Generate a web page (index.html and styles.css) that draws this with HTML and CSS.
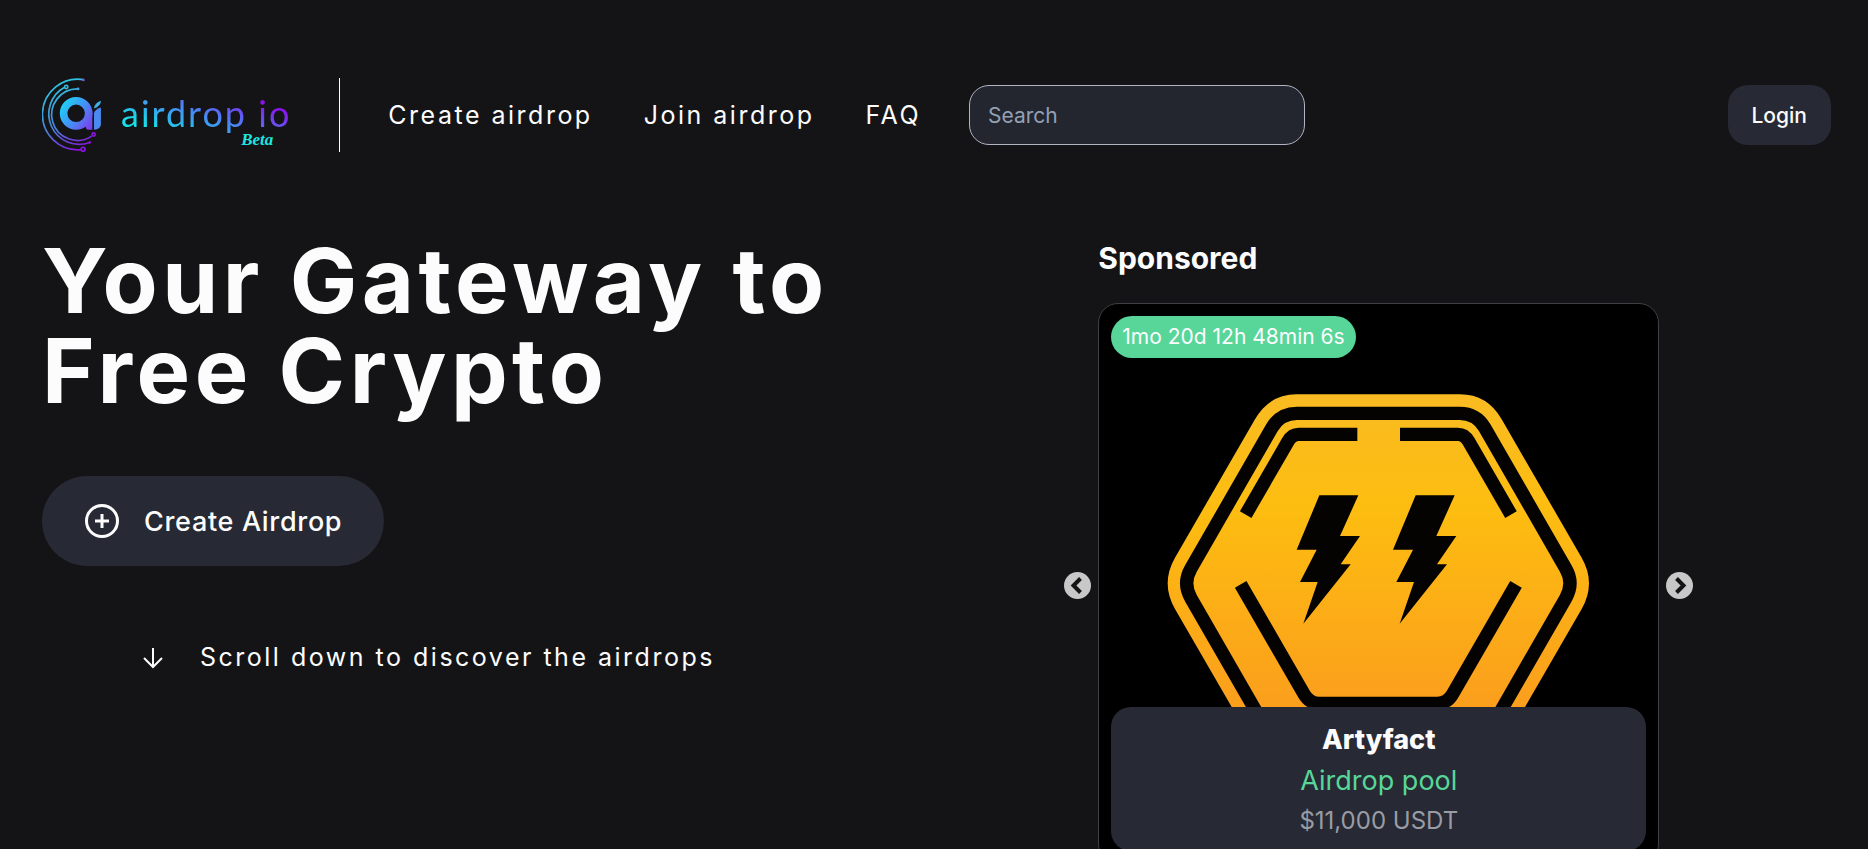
FILE: index.html
```html
<!DOCTYPE html>
<html lang="en">

<head>
    <meta charset="utf-8">
    <meta name="viewport" content="width=device-width, initial-scale=1">
    <title>airdrop io</title>
    <link rel="stylesheet" href="styles.css">
</head>

<body>
    <header class="header">
        <a class="logo" href="#">
            <svg class="logo-mark" viewBox="36 38 184 224" aria-hidden="true">
                <defs>
                    <linearGradient id="arcs" gradientUnits="userSpaceOnUse" x1="70" y1="60" x2="150" y2="255">
                        <stop offset="0" stop-color="#2fc4e0"/>
                        <stop offset="0.6" stop-color="#4a7fd8"/>
                        <stop offset="1" stop-color="#8a12dc"/>
                    </linearGradient>
                    <linearGradient id="letters" gradientUnits="userSpaceOnUse" x1="95" y1="120" x2="195" y2="195">
                        <stop offset="0" stop-color="#1fd0f5"/>
                        <stop offset="0.5" stop-color="#4a86f5"/>
                        <stop offset="1" stop-color="#8a2be8"/>
                    </linearGradient>
                </defs>
                <g fill="none" stroke="url(#arcs)" stroke-width="5">
                    <path d="M162 43A107 107 0 1 0 154 255"/>
                    <path d="M104 66A92 92 0 0 0 180 233"/>
                    <path d="M145 71A78 78 0 1 0 186 214"/>
                    <circle cx="109" cy="65" r="5"/>
                    <circle cx="192" cy="209" r="5" stroke="#8a12dc"/>
                    <circle cx="160" cy="254" r="6" stroke="#8a12dc"/>
                </g>
                <circle cx="161" cy="44" r="4" fill="#7a5ad8"/>
                <circle cx="145" cy="71" r="4" fill="#4a9fe0"/>
                <circle cx="180" cy="233" r="4" fill="#8a12dc"/>
                <circle cx="139" cy="145" r="38" fill="none" stroke="url(#letters)" stroke-width="23"/>
                <path d="M168 138L188 138V195H178Q168 195 168 184Z" fill="url(#letters)"/>
                <path d="M193 145Q195 133 214 127V178Q214 192 193 195Z" fill="#4a8af0"/>
                <path d="M193 130Q195 113 214 107Q214 124 193 130Z" fill="#3fb0e8"/>
            </svg>
            <span class="logo-name">airdrop io</span>
            <span class="logo-beta">Beta</span>
        </a>
        <nav class="nav">
            <a href="#">Create airdrop</a>
            <a href="#">Join airdrop</a>
            <a href="#">FAQ</a>
        </nav>
        <input class="search" type="search" placeholder="Search" aria-label="Search">
        <button class="login" type="button">Login</button>
    </header>

    <main class="main">
        <section class="hero">
            <h1>Your Gateway to<br>Free Crypto</h1>
            <button class="create" type="button">
                <svg viewBox="0 0 36 36" width="36" height="36" aria-hidden="true">
                    <circle cx="18" cy="18" r="15.5"/>
                    <path d="M18 11V25M11 18H25"/>
                </svg>
                Create Airdrop
            </button>
            <p class="scroll">
                <svg viewBox="0 0 24 24" width="24" height="24" aria-hidden="true">
                    <path d="M12 3V22M3 13L12 22L21 13"/>
                </svg>
                Scroll down to discover the airdrops
            </p>
        </section>

        <section class="sponsored">
            <h2>Sponsored</h2>
            <div class="carousel">
                <button class="arrow" type="button" aria-label="Previous">
                    <svg viewBox="0 0 27 27" aria-hidden="true">
                        <circle cx="13.5" cy="13.5" r="13.5"/>
                        <path d="M16.5 6.5L9.5 13.5L16.5 20.5"/>
                    </svg>
                </button>
                <article class="card">
                    <!-- hexagon artwork -->
                    <svg class="card-art" viewBox="-153 -201 1677 1677" aria-hidden="true">
                        <defs>
                            <linearGradient id="gold" gradientUnits="userSpaceOnUse" x1="0" y1="70" x2="0" y2="1204">
                                <stop offset="0" stop-color="#f9bb22"/>
                                <stop offset="0.3" stop-color="#fdbd10"/>
                                <stop offset="0.8" stop-color="#fba01c"/>
                                <stop offset="1" stop-color="#f8901c"/>
                            </linearGradient>
                        </defs>
                        <path fill="url(#gold)" d="M440 70H930Q1012 70 1055 145L1295 560Q1339 637 1295 714L1055 1129Q1012 1204 930 1204H440Q358 1204 315 1129L75 714Q31 637 75 560L315 145Q358 70 440 70Z"/>
                        <g fill="none" stroke="#050202" stroke-width="40">
                            <path d="M441 127H929Q979 127 1004 170L1247 592Q1273 637 1247 682L1004 1104Q979 1147 929 1147H441Q391 1147 366 1104L123 682Q97 637 123 592L366 170Q391 127 441 127Z"/>
                            <path d="M622 190H446Q426 190 414 211L287 431"/>
                            <path d="M750 190H924Q944 190 956 211L1083 431"/>
                            <path d="M272 640L462 969Q478 997 508 997H862Q892 997 908 969L1098 640"/>
                        </g>
                        <g fill="#050202">
                            <path d="M508 373H625L570 495H630L572 580H602L460 758L503 633H450L500 536H440Z"/>
                            <path d="M797 373H914L859 495H919L861 580H891L749 758L792 633H739L789 536H729Z"/>
                        </g>
                    </svg>
                    <span class="timer">1mo 20d 12h 48min 6s</span>
                    <div class="info">
                        <h3>Artyfact</h3>
                        <p class="pool">Airdrop pool</p>
                        <p class="amount">$11,000 USDT</p>
                    </div>
                </article>
                <button class="arrow" type="button" aria-label="Next">
                    <svg viewBox="0 0 27 27" aria-hidden="true">
                        <circle cx="13.5" cy="13.5" r="13.5"/>
                        <path d="M10.5 6.5L17.5 13.5L10.5 20.5"/>
                    </svg>
                </button>
            </div>
        </section>
    </main>
</body>

</html>
```

FILE: styles.css
```css
* {
    box-sizing: border-box;
}

html {
    scrollbar-width: none;
}

body {
    margin: 0;
    padding: 78px 37px 0 42px;
    background-color: #141416;
    color: #fcfcfd;
    font-family: Inter, "Liberation Sans", sans-serif;
}

h1, h2, h3, p {
    margin: 0;
}

button {
    border: 0;
    color: #fcfcfd;
    font-family: inherit;
    font-weight: 500;
    cursor: pointer;
}

/* header */
.header {
    display: flex;
    align-items: center;
}

.logo {
    position: relative;
    display: flex;
    align-items: center;
    gap: 18px;
    height: 74px;
    padding-right: 48px;
    border-right: 1px solid #fcfcfd;
    text-decoration: none;
}

.logo-mark {
    width: 61px;
    height: 74px;
}

.logo-name {
    padding-bottom: 4px;
    font-family: Lato, sans-serif;
    font-size: 36px;
    font-weight: 400;
    line-height: 44px;
    letter-spacing: 2px;
    background: linear-gradient(20deg, #16e0e8 20%, #4a86f5 50%, #8a12ec 80%);
    background-clip: text;
    -webkit-background-clip: text;
    color: transparent;
}

.logo-beta {
    position: absolute;
    right: 66px;
    bottom: 2px;
    color: #1fe6e0;
    font-family: "Liberation Serif", cursive;
    font-size: 17px;
    font-style: italic;
    font-weight: 700;
    line-height: 20px;
}

.nav {
    display: flex;
    gap: 51px;
    margin: 0 48px;
}

.nav a {
    color: #fcfcfd;
    font-size: 25px;
    letter-spacing: 0.1em;
    text-decoration: none;
    white-space: nowrap;
}

.search {
    width: 336px;
    height: 60px;
    padding: 0 18px;
    border: 1px solid #b1b5c3;
    border-radius: 20px;
    background-color: #23262f;
    color: #fcfcfd;
    font-family: inherit;
    font-size: 21px;
}

.search::placeholder {
    color: #94a0b4;
}

.login {
    height: 60px;
    margin-left: auto;
    padding: 0 24px;
    border-radius: 20px;
    background-color: #272a34;
    font-size: 21px;
}

/* content */
.main {
    display: grid;
    grid-template-columns: 4fr 3fr;
    padding-top: 84px;
}

h1 {
    font-size: 90px;
    font-weight: 700;
    line-height: 90px;
    letter-spacing: 0.05em;
}

.create {
    display: flex;
    align-items: center;
    gap: 24px;
    height: 90px;
    margin-top: 60px;
    padding: 0 42px;
    border-radius: 45px;
    background-color: #272a34;
    font-size: 27px;
    letter-spacing: 0.025em;
}

.create svg, .scroll svg {
    fill: none;
    stroke: #fcfcfd;
    stroke-width: 3;
}

.scroll {
    display: flex;
    align-items: center;
    gap: 35px;
    margin-top: 75px;
    padding-left: 99px;
    font-size: 25px;
    line-height: 32px;
    letter-spacing: 0.1em;
}

.scroll svg {
    stroke-width: 2;
}

.sponsored h2 {
    padding: 4px 0 27px 34px;
    font-size: 30px;
    line-height: 36px;
}

.carousel {
    display: flex;
    align-items: center;
    gap: 7px;
}

.arrow {
    flex: none;
    width: 27px;
    height: 27px;
    margin-top: 4px;
    padding: 0;
    background: none;
}

.arrow svg {
    display: block;
    fill: #c8c8c8;
}

.arrow path {
    fill: none;
    stroke: #141416;
    stroke-width: 4;
}

.card {
    position: relative;
    display: flex;
    flex-direction: column;
    justify-content: space-between;
    align-items: flex-start;
    width: 100%;
    max-width: 561px;
    aspect-ratio: 1;
    padding: 12px;
    border: 1px solid #404044;
    border-radius: 20px;
    background-color: #000;
    overflow: hidden;
}

.card-art {
    position: absolute;
    inset: 0;
}

.timer, .info {
    position: relative;
}

.timer {
    padding: 0 11px;
    border-radius: 21px;
    background-color: #58d699;
    font-size: 21px;
    line-height: 42px;
}

.info {
    width: 100%;
    padding: 12px 12px 10px;
    border-radius: 20px;
    background-color: #272a34;
    text-align: center;
}

.info h3 {
    font-size: 27px;
    font-weight: 800;
    line-height: 42px;
}

.info p {
    line-height: 40px;
}

.pool {
    color: #58d699;
    font-size: 27px;
}

.amount {
    color: #9a9ca4;
    font-size: 24px;
}
```
